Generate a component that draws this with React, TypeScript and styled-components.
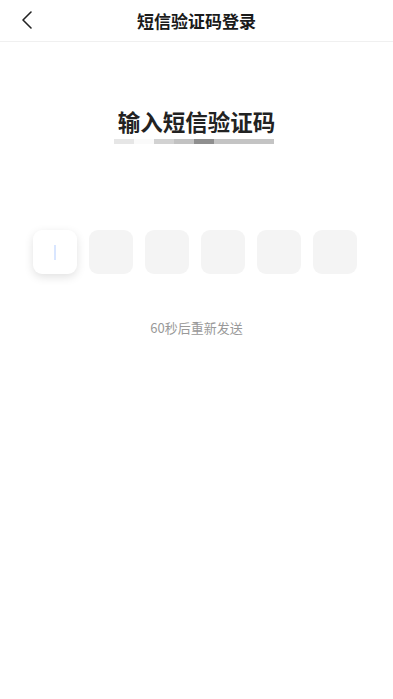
import React from "react";
import styled, { createGlobalStyle } from "styled-components";

const GlobalStyle = createGlobalStyle`
  html, body {
    margin: 0;
    padding: 0;
    background: #ffffff;
    font-family: "Noto Sans CJK SC", "Noto Sans", sans-serif;
  }
`;

const segments = [
  { w: 20, c: "#e6e6e6" },
  { w: 20, c: "#fafafa" },
  { w: 20, c: "#d2d2d2" },
  { w: 20, c: "#c2c2c2" },
  { w: 20, c: "#8f8f8f" },
  { w: 60, c: "#c4c4c4" },
];

const App: React.FC = () => {
  return (
    <Page>
      <GlobalStyle />
      <Header>
        <BackButton aria-label="返回">
          <svg width={14} height={20} viewBox="0 0 14 20" fill="none" stroke="#222" strokeWidth={1.6} strokeLinecap="round" strokeLinejoin="round">
            <polyline points="11 2 3 10 11 18" />
          </svg>
        </BackButton>
        <HeaderTitle>短信验证码登录</HeaderTitle>
      </Header>

      <Heading>输入短信验证码</Heading>
      <Bar>
        {segments.map((s, i) => (
          <Segment key={i} $w={s.w} $c={s.c} />
        ))}
      </Bar>

      <CodeRow>
        {[0, 1, 2, 3, 4, 5].map((i) => (
          <CodeBox key={i} $active={i === 0}>
            {i === 0 && <Caret />}
          </CodeBox>
        ))}
      </CodeRow>

      <Resend>60秒后重新发送</Resend>
    </Page>
  );
};

const Page = styled.div`
  width: 393px;
  min-height: 699px;
  background: #fff;
`;

const Header = styled.header`
  position: relative;
  height: 41px;
  display: flex;
  align-items: center;
  justify-content: center;
  border-bottom: 1px solid #f0f0f0;
`;

const BackButton = styled.button`
  position: absolute;
  left: 17px;
  top: 10px;
  width: 20px;
  height: 20px;
  padding: 0;
  border: none;
  background: none;
  display: flex;
  align-items: center;
  justify-content: center;
`;

const HeaderTitle = styled.h1`
  margin: 0;
  font-size: 17px;
  font-weight: 700;
  color: #1a1a1a;
  line-height: 1;
`;

const Heading = styled.h2`
  margin: 64px 0 0;
  text-align: center;
  font-size: 22.5px;
  font-weight: 700;
  color: #222;
  line-height: 30px;
`;

const Bar = styled.div`
  display: flex;
  padding-left: 114px;
  margin-top: 3px;
`;

const Segment = styled.div<{ $w: number; $c: string }>`
  width: ${(p) => p.$w}px;
  height: 5px;
  background: ${(p) => p.$c};
`;

const CodeRow = styled.div`
  display: flex;
  gap: 12.2px;
  padding-left: 33px;
  margin-top: 86px;
`;

const CodeBox = styled.div<{ $active: boolean }>`
  width: 43.8px;
  height: 44px;
  border-radius: 9px;
  background: ${(p) => (p.$active ? "#ffffff" : "#f4f4f4")};
  box-shadow: ${(p) => (p.$active ? "0 3px 10px rgba(0, 0, 0, 0.12)" : "none")};
  display: flex;
  align-items: center;
  justify-content: center;
`;

const Caret = styled.div`
  width: 1.5px;
  height: 15px;
  background: #d9e6ff;
`;

const Resend = styled.p`
  margin: 45px 0 0;
  text-align: center;
  font-size: 13px;
  color: #999;
  line-height: 18px;
`;

export default App;
